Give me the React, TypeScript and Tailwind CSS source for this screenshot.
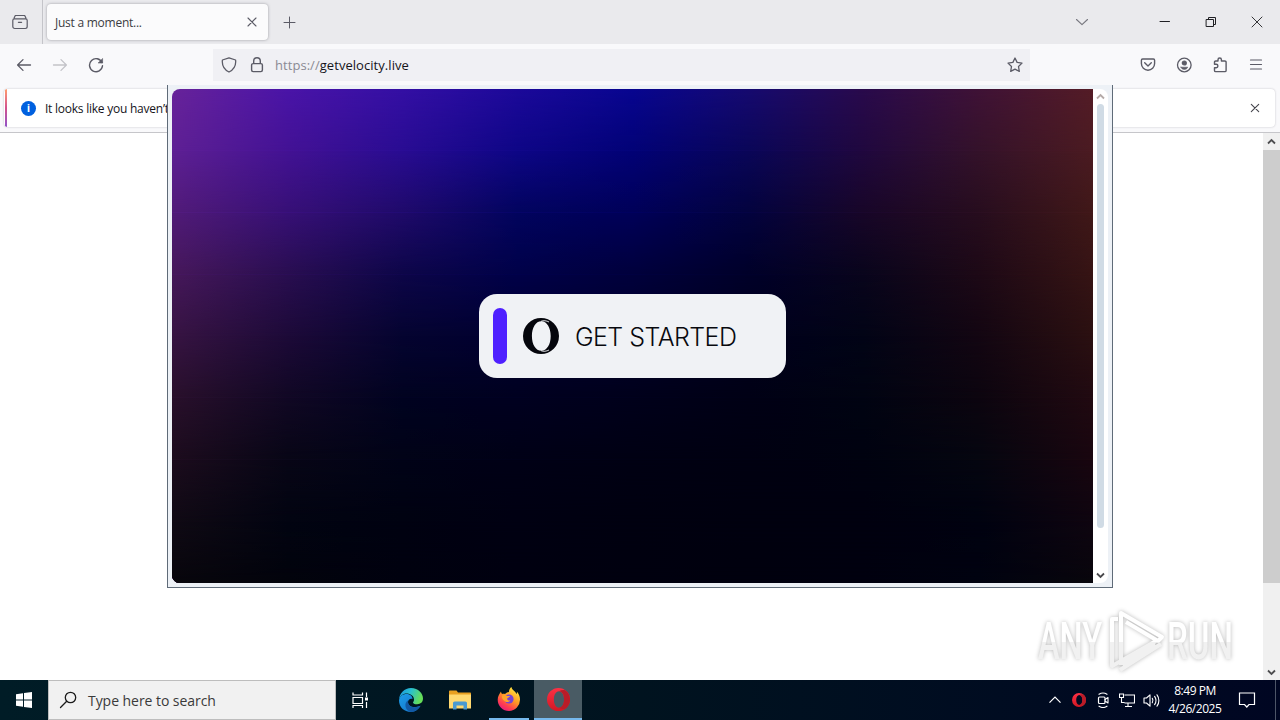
import type { ReactNode } from "react";

// Colour rows of the promo backdrop, left to right, evenly spaced top to bottom
const MESH: string[][] = [
  ["#68239a", "#4a14a8", "#340fa4", "#1c099a", "#080690", "#160a70", "#290a4c", "#3f1236", "#541c26"],
  ["#5e2094", "#431294", "#290c92", "#0e0686", "#020276", "#0a0658", "#20083e", "#34122a", "#4b1b21"],
  ["#511b78", "#371076", "#1f0a6a", "#02045e", "#000058", "#03033e", "#180628", "#270d1e", "#401818"],
  ["#46185a", "#290e50", "#0d0648", "#000148", "#00003c", "#000029", "#09051c", "#1d0916", "#361414"],
  ["#371442", "#1d0a38", "#050430", "#000030", "#00002a", "#00001d", "#020416", "#130612", "#2b1011"],
  ["#29102b", "#110824", "#010320", "#000020", "#00001b", "#000015", "#010412", "#0c050f", "#210a11"],
  ["#1c0c1d", "#080616", "#010317", "#000016", "#000013", "#000011", "#000210", "#050610", "#19060f"],
  ["#100a14", "#020411", "#000211", "#000012", "#000010", "#00000f", "#00000f", "#000210", "#0f0510"],
  ["#08060c", "#02030c", "#00010f", "#000010", "#00000f", "#00000e", "#00000f", "#000210", "#08060c"],
];

interface IconProps {
  size?: number;
  className?: string;
  children: ReactNode;
}

function Icon({ size = 16, className = "", children }: IconProps) {
  return (
    <svg
      width={size}
      height={size}
      viewBox={`0 0 ${size} ${size}`}
      fill="none"
      stroke="currentColor"
      strokeWidth={1.2}
      strokeLinecap="round"
      strokeLinejoin="round"
      className={`shrink-0 ${className}`}
    >
      {children}
    </svg>
  );
}

function Backdrop() {
  const step = 100 / (MESH.length - 1);
  return (
    <svg className="absolute inset-0 h-full w-full" viewBox="0 0 100 100" preserveAspectRatio="none">
      <defs>
        {MESH.map((row, i) => (
          <linearGradient key={i} id={`row${i}`} x1="0" x2="1" y1="0" y2="0">
            {row.map((color, j) => (
              <stop key={j} offset={j / (row.length - 1)} stopColor={color} />
            ))}
          </linearGradient>
        ))}
        <linearGradient id="fade" x1="0" x2="0" y1="0" y2="1">
          <stop offset="0" stopColor="#fff" stopOpacity="0" />
          <stop offset="1" stopColor="#fff" />
        </linearGradient>
        {MESH.slice(1).map((_, i) => (
          <mask key={i} id={`mask${i + 1}`} maskUnits="userSpaceOnUse" x="0" y="0" width="100" height="100">
            <rect x="0" y={i * step} width="100" height={step} fill="url(#fade)" />
            <rect x="0" y={(i + 1) * step} width="100" height="100" fill="#fff" />
          </mask>
        ))}
      </defs>
      {MESH.map((_, i) => (
        <rect key={i} width="100" height="100" fill={`url(#row${i})`} mask={i ? `url(#mask${i})` : undefined} />
      ))}
    </svg>
  );
}

function TabStrip() {
  return (
    <div className="flex h-11 shrink-0 items-center bg-[#eaeaed] text-[#5b5b66]">
      <div className="flex h-full w-[43px] items-center border-r border-[#c4c4c9] pl-3">
        <Icon>
          <path d="M3.300 1.500h9.400M2 4.300 3.300 1.500M14 4.300l-1.300-2.800M2.300 4.900h11.400a1.500 1.500 0 0 1 1.500 1.500v6.200a1.900 1.900 0 0 1-1.900 1.900H2.700A1.900 1.900 0 0 1 .8 12.600V6.400a1.500 1.500 0 0 1 1.500-1.500zM6.400 8.300h3.200" />
        </Icon>
      </div>
      <div className="ml-1 flex h-9 w-[221px] items-center justify-between rounded bg-[#fbfbfc] pl-2 pr-[11px] shadow-[0_0_3px_rgba(90,90,100,0.55)]">
        <span className="pt-px font-['Open_Sans',sans-serif] text-[12px] tracking-[-0.250px] text-[#3b3b42]">Just a moment...</span>
        <Icon size={10}>
          <path d="M1 1l8 8M9 1 1 9" strokeWidth={1.1} />
        </Icon>
      </div>
      <Icon size={14} className="ml-[14px]">
        <path d="M7.500 2v11M2 7.500h11" strokeWidth={1} />
      </Icon>
      <div className="ml-auto flex items-center pr-[17px] text-[#202024]">
        <Icon size={14} className="mr-[69px] text-[#77777f]">
          <path d="M1.500 4.500 7 9.700l5.500-5.200" strokeWidth={1.1} />
        </Icon>
        <Icon size={12} className="mr-[34px]">
          <path d="M2 5.500h9.500" strokeWidth={1} />
        </Icon>
        <Icon size={12} className="mr-[35px]">
          <path d="M2.500 3.500h7v7h-7zM4.500 3.500v-2h7v7h-2" strokeWidth={1} strokeLinejoin="miter" />
        </Icon>
        <Icon size={12}>
          <path d="M1 1l10 10M11 1 1 11" strokeWidth={0.9} />
        </Icon>
      </div>
    </div>
  );
}

function NavBar() {
  return (
    <div className="flex h-[41px] shrink-0 items-center bg-[#f9f9fb] pl-4 pr-4 text-[#5b5b66]">
      <Icon>
        <path d="M14.500 8H1.800M7 2.600 1.600 8 7 13.400" strokeWidth={1.3} />
      </Icon>
      <Icon className="ml-5 text-[#c3c3c8]">
        <path d="M1.500 8h12.700M9 2.600 14.400 8 9 13.400" strokeWidth={1.3} />
      </Icon>
      <Icon className="ml-5">
        <path d="M14 5.600A6.500 6.500 0 1 0 14.500 8.800" strokeWidth={1.4} />
        <path d="M14.600 1.800v4.200h-4.200z" fill="currentColor" strokeWidth={0.6} />
      </Icon>
      <div className="ml-[109px] flex h-8 w-[817px] items-center bg-[#f0f0f4] pl-2 pr-[7px]">
        <Icon>
          <path d="M8 .800 1.400 3c-.5 4.600.3 8.800 6.600 12 6.300-3.200 7.100-7.400 6.600-12z" strokeWidth={1.3} />
        </Icon>
        <Icon className="ml-3">
          <rect x="2.600" y="6.600" width="10.800" height="8" rx="1.500" strokeWidth={1.4} />
          <path d="M4.700 6.400V4a3.300 3.300 0 0 1 6.600 0v2.400" strokeWidth={1.4} />
        </Icon>
        <span className="ml-[10px] pt-0.5 font-['Open_Sans',sans-serif] text-[13px] tracking-[0.050px] text-[#8a8a93]">
          https://<span className="text-[#15141a]">getvelocity.live</span>
        </span>
        <Icon className="ml-auto">
          <path d="m8 1 2.100 4.400 4.900.7-3.500 3.400.8 4.900L8 12.100l-4.300 2.300.8-4.900L1 6.100l4.900-.7z" strokeWidth={1.3} />
        </Icon>
      </div>
      <div className="ml-auto flex items-center gap-5">
        <Icon>
          <path d="M2.600 2h10.800a1.200 1.200 0 0 1 1.200 1.200v3.400a6.600 6.600 0 0 1-13.200 0V3.200A1.200 1.200 0 0 1 2.600 2zM4.700 5.800 8 8.900l3.300-3.100" strokeWidth={1.4} />
        </Icon>
        <Icon>
          <circle cx="8.300" cy="8" r="6.800" strokeWidth={1.3} />
          <circle cx="8.300" cy="6" r="2" fill="currentColor" />
          <path d="M4.900 10.200h6.800c-.6 1.600-2 2.200-3.400 2.200s-2.800-.6-3.400-2.200z" fill="currentColor" strokeWidth={0.6} />
        </Icon>
        <Icon>
          <path d="M6 4V2.700a1.700 1.700 0 0 1 3.400 0V4h3.500a1.200 1.200 0 0 1 1.200 1.200v8.200a1.200 1.200 0 0 1-1.200 1.200H3.700a1.200 1.200 0 0 1-1.200-1.200v-2.700h1.700a1.700 1.700 0 0 0 0-3.400H2.500V5.200A1.200 1.200 0 0 1 3.700 4z" strokeWidth={1.4} />
        </Icon>
        <Icon>
          <path d="M2.500 3h11M2.500 7.500h11M2.500 12h11" strokeWidth={1.2} />
        </Icon>
      </div>
    </div>
  );
}

function Notification() {
  return (
    <div className="flex h-12 shrink-0 border-b border-[#c6c6ca] bg-[#f9f9fb] pb-[5px] pl-1 pr-[5px] pt-1">
      <div className="flex w-full items-center overflow-hidden rounded bg-white pr-[15px] shadow-[0_0_2px_rgba(58,57,68,0.3)]">
        <div className="ml-px h-full w-0.5 bg-linear-to-b from-[#ff9c6b] via-[#d2508c] to-[#9050c8]" />
        <div className="ml-[14px] flex h-[15px] w-[15px] items-center justify-center rounded-full bg-[#0060df] font-['Roboto',sans-serif] text-[11px] font-bold leading-none text-white">
          i
        </div>
        <span className="ml-[9px] whitespace-nowrap pt-px font-['Open_Sans',sans-serif] text-[12px] tracking-[-0.240px] text-[#15141a]">
          It looks like you haven’t
        </span>
        <Icon size={10} className="ml-auto text-[#44444c]">
          <path d="M1.300 1.300l7.400 7.400M8.700 1.300 1.300 8.700" strokeWidth={1.1} />
        </Icon>
      </div>
    </div>
  );
}

function Chevron({ up, className = "" }: { up?: boolean; className?: string }) {
  return (
    <Icon size={10} className={className}>
      <path d={up ? "M1 6.500 4.500 3 8 6.500" : "M1 3.500 4.500 7 8 3.500"} strokeWidth={1.8} strokeLinecap="butt" strokeLinejoin="miter" />
    </Icon>
  );
}

function PopupWindow() {
  return (
    <div className="absolute left-[167px] top-[85px] flex h-[503px] w-[946px] border border-t-0 border-[#5f6b78] bg-[#edf1f6] px-1 pb-1 pt-1">
      <div className="relative flex flex-1 items-center justify-center overflow-hidden rounded-l-lg">
        <Backdrop />
        <button className="relative flex h-[84px] w-[307px] items-center rounded-[18px] bg-[#f0f2f5] pl-[14px]">
          <span className="h-14 w-[14px] rounded-full bg-[#4f20ff]" />
          <svg width="36" height="36" viewBox="0 0 36 36" className="ml-4">
            <path fill="#05060c" fillRule="evenodd" d="M18 0a18 18 0 1 1 0 36 18 18 0 0 1 0-36zM18.300 3.200C12.700 3.200 8.900 9.500 8.900 18s3.800 14.800 9.400 14.800S27.700 26.500 27.700 18 23.900 3.200 18.300 3.200z" />
            <path d="M18 3.300c2.500-1 5.500-.7 8 .7M18 32.700c2.500 1 5.500.7 8-.7" fill="none" stroke="#f0f2f5" strokeWidth="0.900" />
          </svg>
          <span className="ml-4 whitespace-nowrap pt-0.5 font-['Inter',sans-serif] text-[25px] font-light leading-none tracking-[-0.550px] text-[#08090e]">
            GET STARTED
          </span>
        </button>
      </div>
      <div className="flex w-[15px] flex-col items-center rounded-r-lg bg-white py-[3px]">
        <Chevron up className="text-[#b5aaa8]" />
        <div className="mt-0.5 h-[424px] w-[7px] rounded-full bg-[#d0dbe5]" />
        <Chevron className="mt-auto text-[#48484c]" />
      </div>
    </div>
  );
}

function Watermark() {
  return (
    <svg
      className="absolute left-[1030px] top-[601px] drop-shadow-[0_0_2px_rgba(0,0,0,0.28)]"
      width="250"
      height="78"
      viewBox="0 0 250 78"
    >
      <defs>
        <linearGradient id="mark" gradientUnits="userSpaceOnUse" x1="0" x2="0" y1="0" y2="78">
          <stop offset="0.520" stopColor="#fff" />
          <stop offset="0.520" stopColor="#f1f1f1" />
        </linearGradient>
      </defs>
      <g fill="url(#mark)" fontFamily="Roboto, sans-serif" fontWeight="500" fontSize="51">
        <text x="8" y="58" textLength="64" lengthAdjust="spacingAndGlyphs">ANY</text>
        <text x="137" y="58" textLength="66" lengthAdjust="spacingAndGlyphs">RUN</text>
      </g>
      <g fill="none" stroke="url(#mark)" strokeWidth="4" strokeLinejoin="round">
        <path d="M91 64V12l41 24-4 4-32-19" />
        <path d="M88 18h-6v47l9-5 35-20" />
        <path d="M90 69l41-26M92 63l33-20" />
      </g>
    </svg>
  );
}

function Page() {
  return (
    <div className="flex flex-1 justify-end bg-white">
      <div className="flex w-[17px] flex-col bg-[#f0f0f0] text-[#4e4e50]">
        <div className="flex h-[17px] items-center justify-center">
          <Chevron up />
        </div>
        <div className="h-[433px] bg-[#cdcdcd]" />
        <div className="mt-auto flex h-[17px] items-center justify-center">
          <Chevron />
        </div>
      </div>
    </div>
  );
}

function OperaLogo({ size }: { size: number }) {
  return (
    <svg width={size} height={size} viewBox="0 0 24 24">
      <defs>
        <linearGradient id="opera" x1="0" x2="0" y1="0" y2="1">
          <stop offset="0" stopColor="#ff3044" />
          <stop offset="1" stopColor="#d01824" />
        </linearGradient>
      </defs>
      <path fill="url(#opera)" fillRule="evenodd" d="M12 0a12 12 0 1 1 0 24 12 12 0 0 1 0-24zm.500 3.500C9.200 3.500 7.200 7.300 7.200 12s2 8.500 5.300 8.500 5.300-3.800 5.300-8.500-2-8.500-5.300-8.500z" />
      <path fill="#bb1c28" d="M12.500 3.500C15.300 1.700 18.800 1.800 20.500 3.500 25.200 8 25.200 16 20.500 20.500c-2 1.800-5.200 1.800-8 0 3.300 0 5.300-3.800 5.300-8.500s-2-8.500-5.300-8.500z" />
    </svg>
  );
}

function EdgeLogo() {
  return (
    <svg width="24" height="24" viewBox="0 0 24 24">
      <defs>
        <linearGradient id="edge-top" x1="0" x2="1" y1="0" y2="0.300">
          <stop offset="0" stopColor="#1893dd" />
          <stop offset="0.500" stopColor="#29bfd0" />
          <stop offset="1" stopColor="#65de59" />
        </linearGradient>
        <linearGradient id="edge-low" x1="0" x2="1" y1="0" y2="1">
          <stop offset="0" stopColor="#1c9ce8" />
          <stop offset="1" stopColor="#1470c4" />
        </linearGradient>
      </defs>
      <path fill="url(#edge-low)" d="M0 12.500C.5 8 4 6 7.500 6c4 0 6 2.500 6 5-2-1-4.500.5-4.500 3.300 0 4 5.300 6.500 12.500 3.500C19.500 21.500 16 24 12 24 5 24 0 19 0 12.500z" />
      <path fill="#1259a4" d="M9.200 12.200c-1.300 5 4.300 9.300 12.300 5.600C19.500 21.500 16 24 12 24 6 23 4.500 14.500 9.200 12.200z" />
      <path fill="url(#edge-top)" d="M0 12C.3 5 5.500 0 12 0c7.500 0 12 5.500 12 10.500 0 3.600-2.500 5.700-5.800 5.700-2.700 0-4.400-1-4.200-1.800.2-.6 1-1 1-2.900 0-3.500-3.500-6-7.600-6C4 5.500.9 8 0 12z" />
    </svg>
  );
}

function FolderLogo() {
  return (
    <svg width="22" height="20" viewBox="0 0 22 20">
      <path fill="#e8a020" d="M0 1.500C0 .7.500.500 1 .500h6.500L9 2.500h12c.6 0 1 .4 1 1v4H0z" />
      <path fill="#ffd970" d="M0 4.500h22v14H0z" />
      <path fill="#4a9ad0" d="M4 19.500v-6.300c0-.9.700-1.700 1.700-1.700h10.600c1 0 1.700.8 1.700 1.700v6.300h-3.500v-4h-7v4z" />
    </svg>
  );
}

function FirefoxLogo() {
  return (
    <svg width="24" height="24" viewBox="0 0 24 24">
      <defs>
        <linearGradient id="fox" x1="0.800" x2="0.200" y1="0" y2="1">
          <stop offset="0" stopColor="#fff044" />
          <stop offset="0.450" stopColor="#ff9a24" />
          <stop offset="0.750" stopColor="#ff3f4e" />
          <stop offset="1" stopColor="#e31587" />
        </linearGradient>
      </defs>
      <path fill="url(#fox)" d="M4 4.500c0 1 .4 1.800 1 2.500C6 6.500 7 6.500 8 7c1.300-1.200 2.500-1.800 4-2-.2-2 1-4 2.500-5 .2 3 4 4 5 7 .6-.5.500-1.500.3-2.500 2 2 3.200 5 3.200 8A11.200 11.200 0 0 1 12 24 11.300 11.300 0 0 1 .7 12.700C.700 9 2.500 7 4 4.500z" />
      <circle cx="12" cy="12" r="4.600" fill="#7543d5" />
      <path fill="#ffa52a" d="M5 8.500c2-1 4-.5 5 .4h3c-.3 1.500-2.600 1.700-2.800 2.500-.2 1.200 1 2.300 3 2-1 2-4.500 2.300-6 .3C6 13 4.500 11 5 8.500z" />
    </svg>
  );
}

function Taskbar() {
  return (
    <div className="flex h-10 shrink-0 items-stretch bg-linear-to-r from-[#001c26] via-[#00131f] to-[#000622] text-white">
      <div className="flex w-12 items-center justify-center">
        <svg width="16" height="16" viewBox="0 0 16 16" fill="#fff">
          <path d="M0 2.200 7 1.200v6.300H0zM8 1.100 16 0v7.500H8zM0 8.500h7v6.300l-7-1zM8 8.500h8V16l-8-1.100z" />
        </svg>
      </div>
      <div className="flex w-72 items-center border border-[#bdbdbd] bg-[#f1f1f1] pl-[10px] text-[#1b1b1b]">
        <Icon size={18}>
          <circle cx="11.500" cy="6.500" r="5.200" strokeWidth={1.300} />
          <path d="M7.700 10.300 1.500 16.500" strokeWidth={1.300} />
        </Icon>
        <span className="ml-[11px] font-['Open_Sans',sans-serif] text-[14px] tracking-[-0.050px] text-[#3a3a3a]">Type here to search</span>
      </div>
      <div className="flex w-12 items-center justify-center">
        <Icon size={17}>
          <path d="M1 .500V3h9.500V.500M1 16v-2.500h9.500V16M1 5.500h9.500v6H1zM14.500.500v4.500M14.500 10v6" strokeWidth={1.200} strokeLinecap="butt" strokeLinejoin="miter" />
          <path d="M13 5.500h3v3h-3z" fill="currentColor" stroke="none" />
        </Icon>
      </div>
      <div className="ml-[3px] flex w-12 items-center justify-center">
        <EdgeLogo />
      </div>
      <div className="flex w-12 items-center justify-center pl-0.5">
        <FolderLogo />
      </div>
      <div className="ml-1.5 flex w-10 items-center justify-center border-b-2 border-[#76b9ed]">
        <FirefoxLogo />
      </div>
      <div className="ml-[5px] flex w-12 items-center justify-center border-b-2 border-[#76b9ed] bg-[#495b64]">
        <OperaLogo size={23} />
      </div>
      <div className="ml-auto flex items-center">
        <Icon size={14} className="mr-[10px]">
          <path d="M1.500 9.700 7 4.200l5.500 5.500" strokeLinecap="butt" strokeLinejoin="miter" />
        </Icon>
        <OperaLogo size={14} />
        <Icon size={16} className="ml-[9px]">
          <rect x="3.500" y="5" width="6.500" height="6.500" rx="1" />
          <path d="M10 7.500 13 5.500v5.500l-3-2M4 2.300c2.500-1.700 5.500-1.700 8 0M4 14.200c2.500 1.700 5.500 1.700 8 0" strokeWidth={1.100} />
        </Icon>
        <Icon size={16} className="ml-2">
          <path d="M5.500 3h10v8h-10M9 11v3M6 14.500h7M.5 2h4v3.500h-4zM2.500 5.500v5h3" strokeWidth={1.100} strokeLinecap="butt" strokeLinejoin="miter" />
        </Icon>
        <Icon size={17} className="ml-2">
          <path d="M1 6h2.500L7 2.800v11.400L3.500 11H1zM9.300 6.300c.8 1.300.8 3.100 0 4.400M11.600 4.400c1.700 2.400 1.700 5.800 0 8.200M14 2.800c2.500 3.300 2.500 8.100 0 11.400" strokeWidth={1.100} />
        </Icon>
        <div className="ml-[5px] flex w-[60px] flex-col items-center whitespace-nowrap font-['Open_Sans',sans-serif] text-[12px] leading-[18px] tracking-[-0.450px]">
          <span>8:49 PM</span>
          <span>4/26/2025</span>
        </div>
        <Icon size={18} className="ml-[13px] mr-[19px]">
          <path d="M1.500 2h15v11.500H11L8.800 16l-2.300-2.500h-5z" strokeWidth={1.200} strokeLinejoin="miter" />
        </Icon>
        <div className="h-10 w-px bg-[#4d5567]" />
        <div className="w-[4px]" />
      </div>
    </div>
  );
}

export default function App() {
  return (
    <div className="relative flex h-[720px] w-[1280px] flex-col overflow-hidden">
      <TabStrip />
      <NavBar />
      <Notification />
      <Page />
      <Taskbar />
      <Watermark />
      <PopupWindow />
    </div>
  );
}
